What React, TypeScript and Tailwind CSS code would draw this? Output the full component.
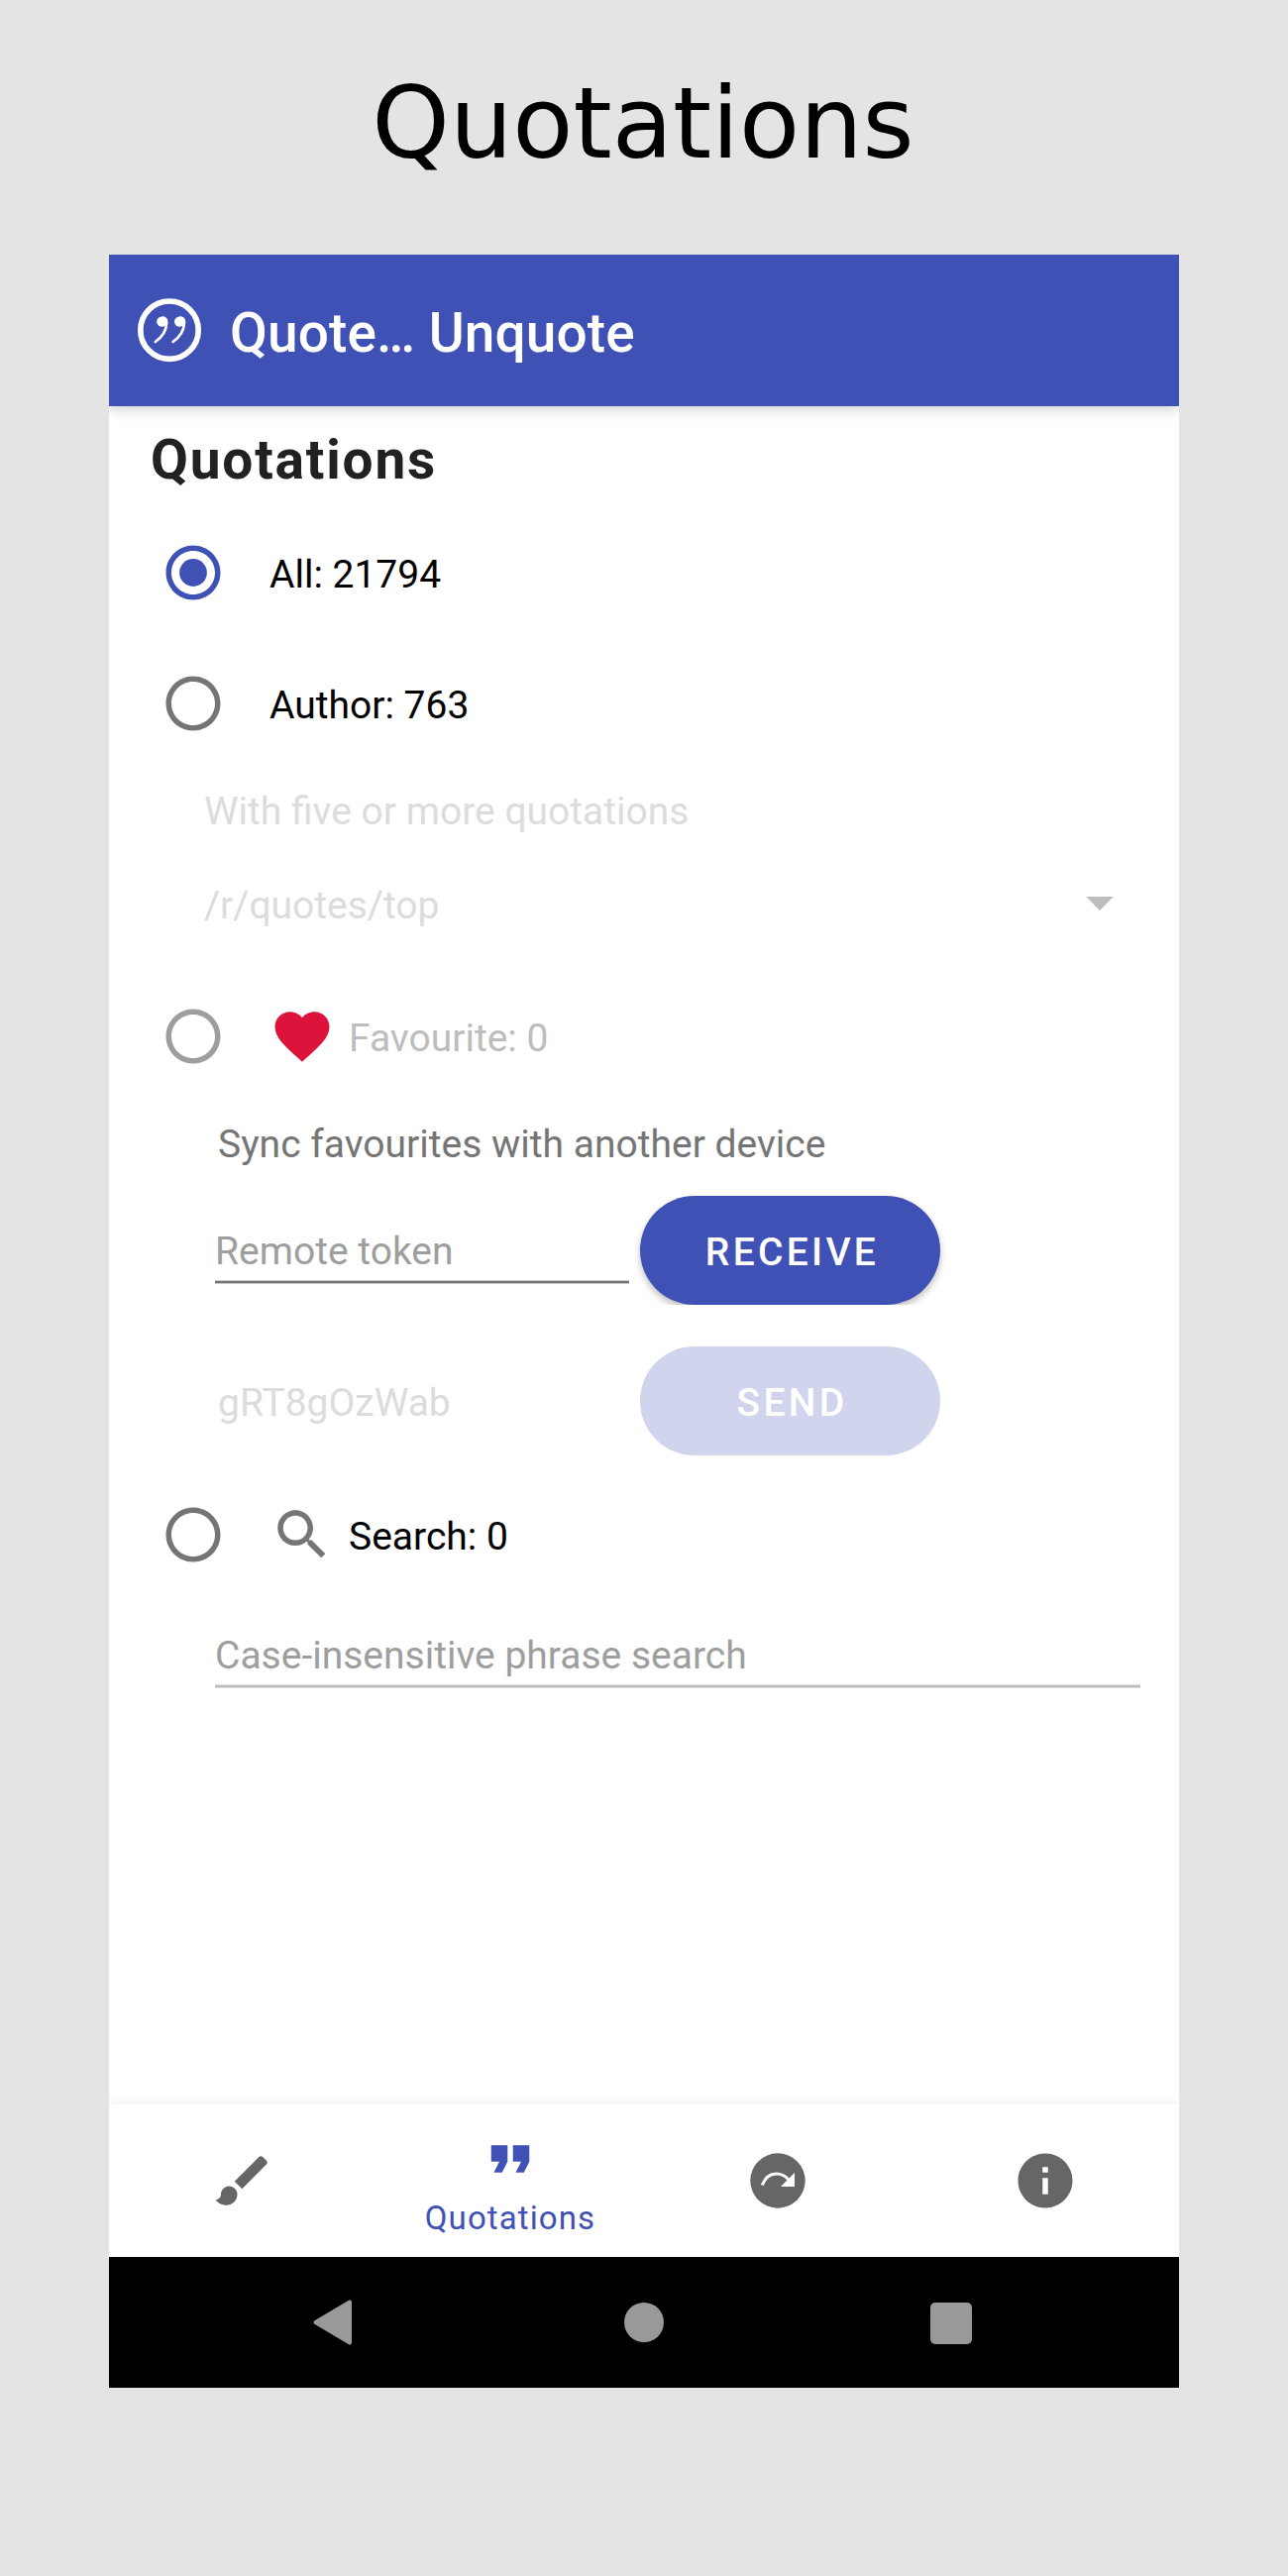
import React from "react";

type RadioProps = { tone: string; checked?: boolean };

function Radio({ tone, checked }: RadioProps) {
  return (
    <svg className={`block size-[66px] shrink-0 ${tone}`} viewBox="0 0 24 24" fill="currentColor">
      <path d="M12 2C6.48 2 2 6.48 2 12s4.48 10 10 10 10-4.48 10-10S17.52 2 12 2zm0 18c-4.42 0-8-3.58-8-8s3.58-8 8-8 8 3.58 8 8-3.58 8-8 8z" />
      {checked && <circle cx="12" cy="12" r="5.05" />}
    </svg>
  );
}

function Icon({ d, className }: { d: string; className: string }) {
  return (
    <svg className={`block size-[66px] shrink-0 ${className}`} viewBox="0 0 24 24" fill="currentColor">
      <path d={d} />
    </svg>
  );
}

const HEART =
  "M12 21.35l-1.45-1.32C5.4 15.36 2 12.28 2 8.5 2 5.42 4.42 3 7.5 3c1.74 0 3.41.81 4.5 2.09C13.09 3.81 14.76 3 16.5 3 19.58 3 22 5.42 22 8.5c0 3.78-3.4 6.86-8.55 11.54L12 21.35z";
const SEARCH =
  "M15.5 14h-.79l-.28-.27C15.41 12.59 16 11.11 16 9.5 16 5.91 13.09 3 9.5 3S3 5.91 3 9.5 5.91 16 9.5 16c1.61 0 3.09-.59 4.23-1.57l.27.28v.79l5 4.99L20.49 19l-4.99-5zm-6 0C7.01 14 5 11.99 5 9.5S7.01 5 9.5 5 14 7.01 14 9.5 11.99 14 9.5 14z";
const BRUSH =
  "M7 14c-1.66 0-3 1.34-3 3 0 1.31-1.16 2-2 2 .92 1.22 2.49 2 4 2 2.21 0 4-1.79 4-4 0-1.66-1.34-3-3-3zm13.71-9.37l-1.34-1.34c-.39-.39-1.02-.39-1.41 0L9 12.25 11.75 15l8.96-8.96c.39-.39.39-1.02 0-1.41z";
const QUOTE = "M6 17h3l2-4V7H5v6h3zm8 0h3l2-4V7h-6v6h3z";
const INFO =
  "M12 2C6.48 2 2 6.48 2 12s4.48 10 10 10 10-4.48 10-10S17.52 2 12 2zm1 15h-2v-6h2v6zm0-8h-2V7h2v2z";

function LogoMark({ x }: { x: number }) {
  return (
    <g transform={`translate(${x} 0)`}>
      <circle cx="25.4" cy="23.6" r="5.2" fill="#fff" />
      <path d="M26.500 19.700c2.600.3 3.800 2.300 3.700 5.300-.3 7.500-4.800 14.300-11.400 19" stroke="#fff" strokeWidth="2.700" strokeLinecap="round" />
    </g>
  );
}

function Logo() {
  return (
    <svg className="block size-[66px] shrink-0" viewBox="0 0 66 66" fill="none">
      <circle cx="33" cy="32.2" r="29.2" stroke="#fff" strokeWidth="5.7" />
      <LogoMark x={0} />
      <LogoMark x={17.8} />
    </svg>
  );
}

export default function App() {
  return (
    <div className="flex h-[2600px] w-[1300px] flex-col items-center bg-[#e4e4e4] font-['Roboto',sans-serif] text-[39px] leading-[46px]">
      <h1 className="h-[257px] pt-[67px] pr-[2px] font-['DejaVu_Sans',sans-serif] text-[100px] leading-[116px] text-black">Quotations</h1>

      <div className="flex h-[2153px] w-[1080px] flex-col overflow-hidden bg-white">
        <header className="z-10 flex h-[153px] shrink-0 items-center bg-[#3f51b5] pl-[28px] text-white shadow-[0_5px_12px_rgba(0,0,0,0.15)]">
          <Logo />
          <span className="ml-[28px] pt-[5px] text-[55px] leading-[64px] font-medium tracking-[0.1px]">Quote… Unquote</span>
        </header>

        <main className="flex flex-1 flex-col overflow-hidden">
          <h2 className="flex h-[102px] items-center pt-[6px] pl-[42px] text-[55px] leading-[64px] font-bold tracking-[1.8px] text-[#212121]">
            Quotations
          </h2>

          <div className="flex h-[132px] items-center pl-[52px]">
            <Radio tone="text-[#3f51b5]" checked />
            <span className="ml-[44px] pt-[3px] text-black">All: 21794</span>
          </div>
          <div className="flex h-[132px] items-center pl-[52px]">
            <Radio tone="text-[#757575]" />
            <span className="ml-[44px] pt-[3px] text-black">Author: 763</span>
          </div>

          <div className="flex h-[85px] items-center pl-[96px] text-[#dcdcdc]">With five or more quotations</div>
          <div className="flex h-[105px] items-center justify-between pr-[66px] pl-[96px] text-[#dcdcdc]">
            <span>/r/quotes/top</span>
            <svg className="mt-[-3px] block h-[14px] w-[28px]" viewBox="0 0 28 14">
              <path d="M0.3 0h27.4L14 14z" fill="#bdbdbd" />
            </svg>
          </div>

          <div className="flex h-[160px] items-center pl-[52px]">
            <Radio tone="text-[#9e9e9e]" />
            <Icon d={HEART} className="ml-[44px] text-[#dc143c]" />
            <span className="ml-[14px] pt-[3px] text-[#bdbdbd]">Favourite: 0</span>
          </div>

          <div className="flex h-[58px] items-center pl-[110px] text-[#757575]">Sync favourites with another device</div>

          <div className="mt-[23px] flex h-[110px] shrink-0 items-center overflow-y-clip pl-[107px]">
            <div className="flex h-full w-[418px] flex-col pt-[33px] text-[#9e9e9e]">
              <span>Remote token</span>
              <div className="mt-[6px] h-[4px] border-y border-[#c8c8c8] bg-[#757575]" />
            </div>
            <button className="ml-[11px] h-[110px] w-[303px] rounded-full bg-[#3f51b5] pt-[4px] pl-[4px] font-medium tracking-[3.3px] text-white shadow-[0_4px_7px_rgba(0,0,0,0.25)]">
              RECEIVE
            </button>
          </div>
          <div className="mt-[42px] flex h-[110px] shrink-0 items-center pl-[110px]">
            <span className="w-[415px] pt-[3px] text-[#dcdcdc]">gRT8gOzWab</span>
            <button className="ml-[11px] h-[110px] w-[303px] rounded-full bg-[#d0d4ed] pt-[4px] pl-[4px] font-medium tracking-[3.3px] text-white">
              SEND
            </button>
          </div>

          <div className="flex h-[160px] shrink-0 items-center pl-[52px]">
            <Radio tone="text-[#757575]" />
            <Icon d={SEARCH} className="ml-[44px] text-[#757575]" />
            <span className="ml-[14px] pt-[3px] text-black">Search: 0</span>
          </div>

          <div className="ml-[107px] flex w-[934px] flex-col pt-[19px] text-[#9e9e9e]">
            <span>Case-insensitive phrase search</span>
            <div className="mt-[6px] h-[4px] border-y border-[#e0e0e0] bg-[#bdbdbd]" />
          </div>
        </main>

        <nav className="grid h-[154px] shrink-0 grid-cols-4 shadow-[0_-3px_10px_rgba(0,0,0,0.05)]">
          <div className="flex justify-center pt-[43.5px]">
            <Icon d={BRUSH} className="text-[#666666]" />
          </div>
          <div className="flex flex-col items-center pt-[22px] text-[#3f51b5]">
            <Icon d={QUOTE} className="" />
            <span className="mt-[7px] text-[33px] leading-[40px] tracking-[1.1px]">Quotations</span>
          </div>
          <div className="flex justify-center pt-[43.5px]">
            <svg className="block size-[66px]" viewBox="0 0 66 66">
              <circle cx="33" cy="33" r="27.7" fill="#666" />
              <path d="M17.2 37.5C20.2 30 25.5 26 31.5 26c5 0 9 2 12.5 6" fill="none" stroke="#fff" strokeWidth="3" />
              <path d="M50 25v14H36z" fill="#fff" />
            </svg>
          </div>
          <div className="flex justify-center pt-[43.5px]">
            <Icon d={INFO} className="text-[#666666]" />
          </div>
        </nav>

        <footer className="flex h-[132px] shrink-0 items-center bg-black pl-[206px]">
          <svg className="block h-[46px] w-[40px]" viewBox="0 0 40 46">
            <path d="M2.5 23L37 2.5v41z" fill="#999" stroke="#999" strokeWidth="4" strokeLinejoin="round" />
          </svg>
          <div className="ml-[274px] size-[40px] rounded-full bg-[#999999]" />
          <div className="mt-px ml-[269px] size-[42px] rounded-[5px] bg-[#999999]" />
        </footer>
      </div>
    </div>
  );
}
